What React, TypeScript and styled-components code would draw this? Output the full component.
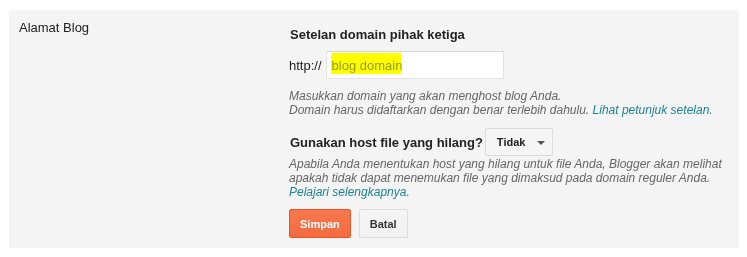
import React from "react";
import styled, { createGlobalStyle } from "styled-components";

const Global = createGlobalStyle`
  html, body { margin: 0; padding: 0; background: #ffffff; }
  body { font-family: "Liberation Sans", Arial, sans-serif; }
`;

const Page = styled.div`
  padding: 10px 8px 9px 9px;
`;

const Panel = styled.div`
  background: #f4f4f4;
  display: grid;
  grid-template-columns: 280px 1fr;
  padding: 10px 0 10px 0;
`;

const Label = styled.div`
  padding-left: 10px;
  font-size: 13px;
  color: #222;
`;

const Content = styled.div`
  display: flex;
  flex-direction: column;
  align-items: flex-start;
  padding-top: 7px;
`;

const Heading = styled.div`
  font-weight: bold;
  font-size: 13px;
  color: #222;
  margin-left: 1px;
`;

const Row = styled.div<{ $mt: number }>`
  display: flex;
  align-items: center;
  margin-top: ${(p) => p.$mt}px;
`;

const Prefix = styled.span`
  font-size: 13px;
  color: #222;
  margin-right: 4px;
`;

const InputBox = styled.div`
  position: relative;
  width: 171px;
  height: 26px;
  background: #fff;
  border: 1px solid #e3e3e3;
  border-top-color: #d6d6d6;
  display: flex;
  align-items: center;
  padding-left: 5px;
  box-sizing: content-box;
  font-size: 13px;
  color: #999;
`;

const Highlight = styled.span`
  position: absolute;
  left: 4px;
  top: 1px;
  width: 70px;
  height: 21px;
  background: #ffff00;
  mix-blend-mode: multiply;
`;

const Help = styled.div<{ $mt: number }>`
  font-size: 12px;
  font-style: italic;
  color: #666;
  line-height: 14px;
  margin-top: ${(p) => p.$mt}px;
`;

const Link = styled.a`
  color: #1b8595;
  text-decoration: none;
`;

const Question = styled.span`
  font-weight: bold;
  font-size: 13px;
  color: #222;
  margin-left: 1px;
`;

const Select = styled.div`
  margin-left: 2px;
  height: 26px;
  width: 66px;
  box-sizing: content-box;
  border: 1px solid #dcdcdc;
  background: #f5f5f5;
  border-radius: 2px;
  display: flex;
  align-items: center;
  font-weight: bold;
  font-size: 11px;
  color: #222;
`;

const SelectText = styled.span`
  margin-left: 11px;
`;

const Caret = styled.span`
  margin-left: 12px;
  margin-top: 1px;
  width: 0;
  height: 0;
  border-left: 4px solid transparent;
  border-right: 4px solid transparent;
  border-top: 4px solid #555;
`;

const Buttons = styled.div`
  display: flex;
  gap: 8px;
  margin-top: 10px;
`;

const Button = styled.button<{ $primary?: boolean }>`
  height: 29px;
  box-sizing: border-box;
  padding: 0 10px;
  font-family: "Liberation Sans", Arial, sans-serif;
  font-weight: bold;
  font-size: 11px;
  border-radius: 2px;
  color: ${(p) => (p.$primary ? "#fff" : "#333")};
  background: ${(p) =>
    p.$primary
      ? "linear-gradient(#f8784e, #f46b40)"
      : "linear-gradient(#f5f5f5, #f1f1f1)"};
  border: 1px solid ${(p) => (p.$primary ? "#e8572a" : "#dcdcdc")};
  cursor: pointer;
`;

export default function App() {
  return (
    <Page>
      <Global />
      <Panel>
        <Label>Alamat Blog</Label>
        <Content>
          <Heading>Setelan domain pihak ketiga</Heading>
          <Row $mt={9}>
            <Prefix>http://</Prefix>
            <InputBox>
              blog domain
              <Highlight />
            </InputBox>
          </Row>
          <Help $mt={10}>
            Masukkan domain yang akan menghost blog Anda.
            <br />
            Domain harus didaftarkan dengan benar terlebih dahulu.{" "}
            <Link href="#">Lihat petunjuk setelan.</Link>
          </Help>
          <Row $mt={11}>
            <Question>Gunakan host file yang hilang?</Question>
            <Select>
              <SelectText>Tidak</SelectText>
              <Caret />
            </Select>
          </Row>
          <Help $mt={1}>
            Apabila Anda menentukan host yang hilang untuk file Anda, Blogger akan melihat
            <br />
            apakah tidak dapat menemukan file yang dimaksud pada domain reguler Anda.
            <br />
            <Link href="#">Pelajari selengkapnya.</Link>
          </Help>
          <Buttons>
            <Button $primary>Simpan</Button>
            <Button>Batal</Button>
          </Buttons>
        </Content>
      </Panel>
    </Page>
  );
}
